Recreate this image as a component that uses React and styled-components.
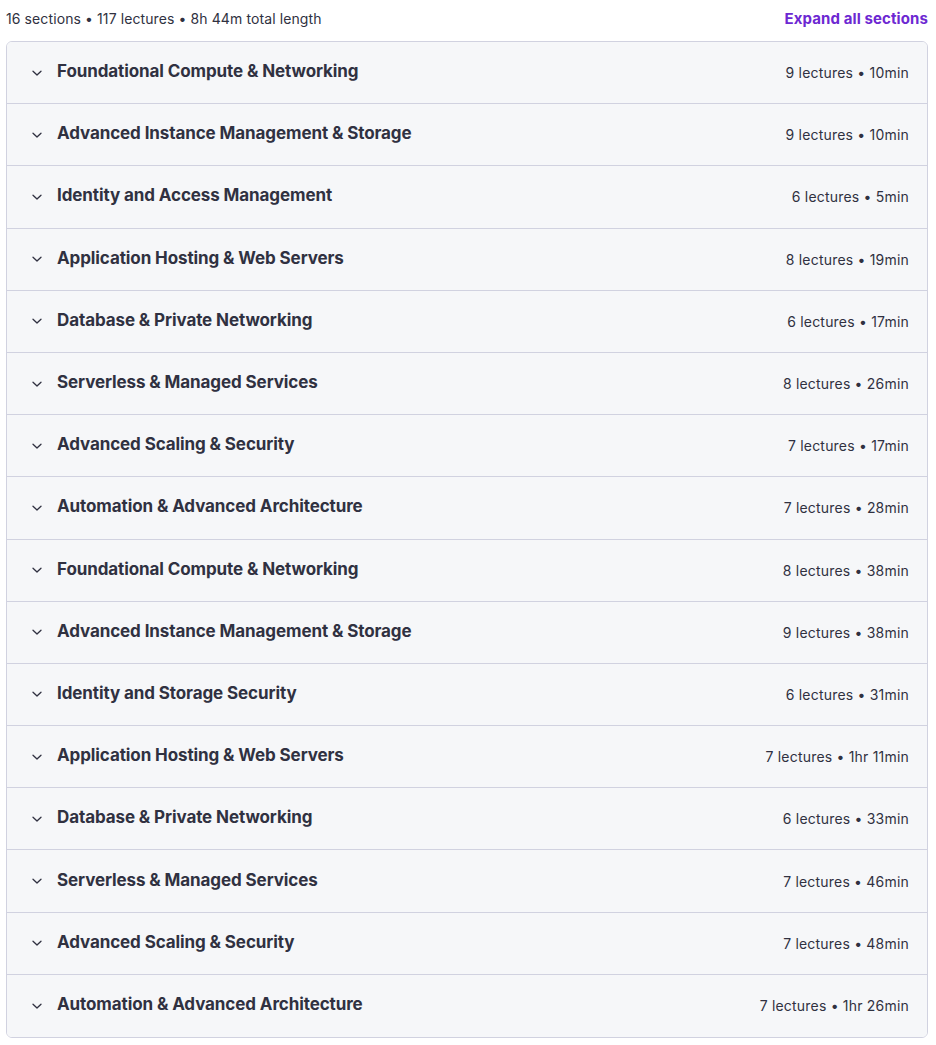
import React from "react"
import styled, { createGlobalStyle } from "styled-components"

const GlobalStyle = createGlobalStyle`
  body {
    margin: 0;
    background: #ffffff;
    font-family: Inter, "Noto Sans", sans-serif;
    color: #303141;
  }
`

const StyledPage = styled.div`
  padding: 0 8px 0 6px;
`
const StyledTopBar = styled.div`
  display: flex;
  align-items: center;
  justify-content: space-between;
  height: 36px;
  margin-bottom: 5px;
`
const StyledSummary = styled.span`
  font-size: 14px;
  color: #303141;
  letter-spacing: 0.1px;
`
const StyledExpandButton = styled.button`
  border: none;
  background: none;
  padding: 0;
  font-family: inherit;
  font-size: 15px;
  font-weight: 700;
  color: #6d28d2;
  cursor: pointer;
  letter-spacing: 0.1px;
`
const StyledAccordion = styled.div`
  border: 1px solid #d1d2e0;
  border-radius: 6px;
  overflow: hidden;
`
const StyledSection = styled.div`
  display: flex;
  align-items: center;
  height: 62.2px;
  box-sizing: border-box;
  padding: 0 18px 0 24px;
  background: #f6f7f9;
  border-bottom: ${({ $last }) => ($last ? "none" : "1px solid #d1d2e0")};
`
const StyledChevron = styled.span`
  display: flex;
  width: 12px;
  margin-right: 14px;
  color: #303141;
`
const StyledTitle = styled.h3`
  flex: 1;
  margin: 0 0 3px;
  font-size: 17px;
  font-weight: 700;
  color: #303141;
  letter-spacing: -0.1px;
`
const StyledMeta = styled.span`
  font-size: 14px;
  color: #303141;
  letter-spacing: 0.2px;
`

const sections = [
  ["Foundational Compute & Networking", 9, "10min"],
  ["Advanced Instance Management & Storage", 9, "10min"],
  ["Identity and Access Management", 6, "5min"],
  ["Application Hosting & Web Servers", 8, "19min"],
  ["Database & Private Networking", 6, "17min"],
  ["Serverless & Managed Services", 8, "26min"],
  ["Advanced Scaling & Security", 7, "17min"],
  ["Automation & Advanced Architecture", 7, "28min"],
  ["Foundational Compute & Networking", 8, "38min"],
  ["Advanced Instance Management & Storage", 9, "38min"],
  ["Identity and Storage Security", 6, "31min"],
  ["Application Hosting & Web Servers", 7, "1hr 11min"],
  ["Database & Private Networking", 6, "33min"],
  ["Serverless & Managed Services", 7, "46min"],
  ["Advanced Scaling & Security", 7, "48min"],
  ["Automation & Advanced Architecture", 7, "1hr 26min"],
]

const Chevron = () => (
  <svg width="12" height="12" viewBox="0 0 12 12" fill="none">
    <path d="M2 4.2 L6 8 L10 4.2" stroke="currentColor" strokeWidth="1.3" strokeLinecap="round" strokeLinejoin="round" />
  </svg>
)

const App = () => {
  return (
    <StyledPage>
      <GlobalStyle />
      <StyledTopBar>
        <StyledSummary>16 sections • 117 lectures • 8h 44m total length</StyledSummary>
        <StyledExpandButton>Expand all sections</StyledExpandButton>
      </StyledTopBar>
      <StyledAccordion>
        {sections.map(([title, lectures, length], i) => (
          <StyledSection key={i} $last={i === sections.length - 1}>
            <StyledChevron>
              <Chevron />
            </StyledChevron>
            <StyledTitle>{title}</StyledTitle>
            <StyledMeta>
              {lectures} lectures • {length}
            </StyledMeta>
          </StyledSection>
        ))}
      </StyledAccordion>
    </StyledPage>
  )
}

export default App
